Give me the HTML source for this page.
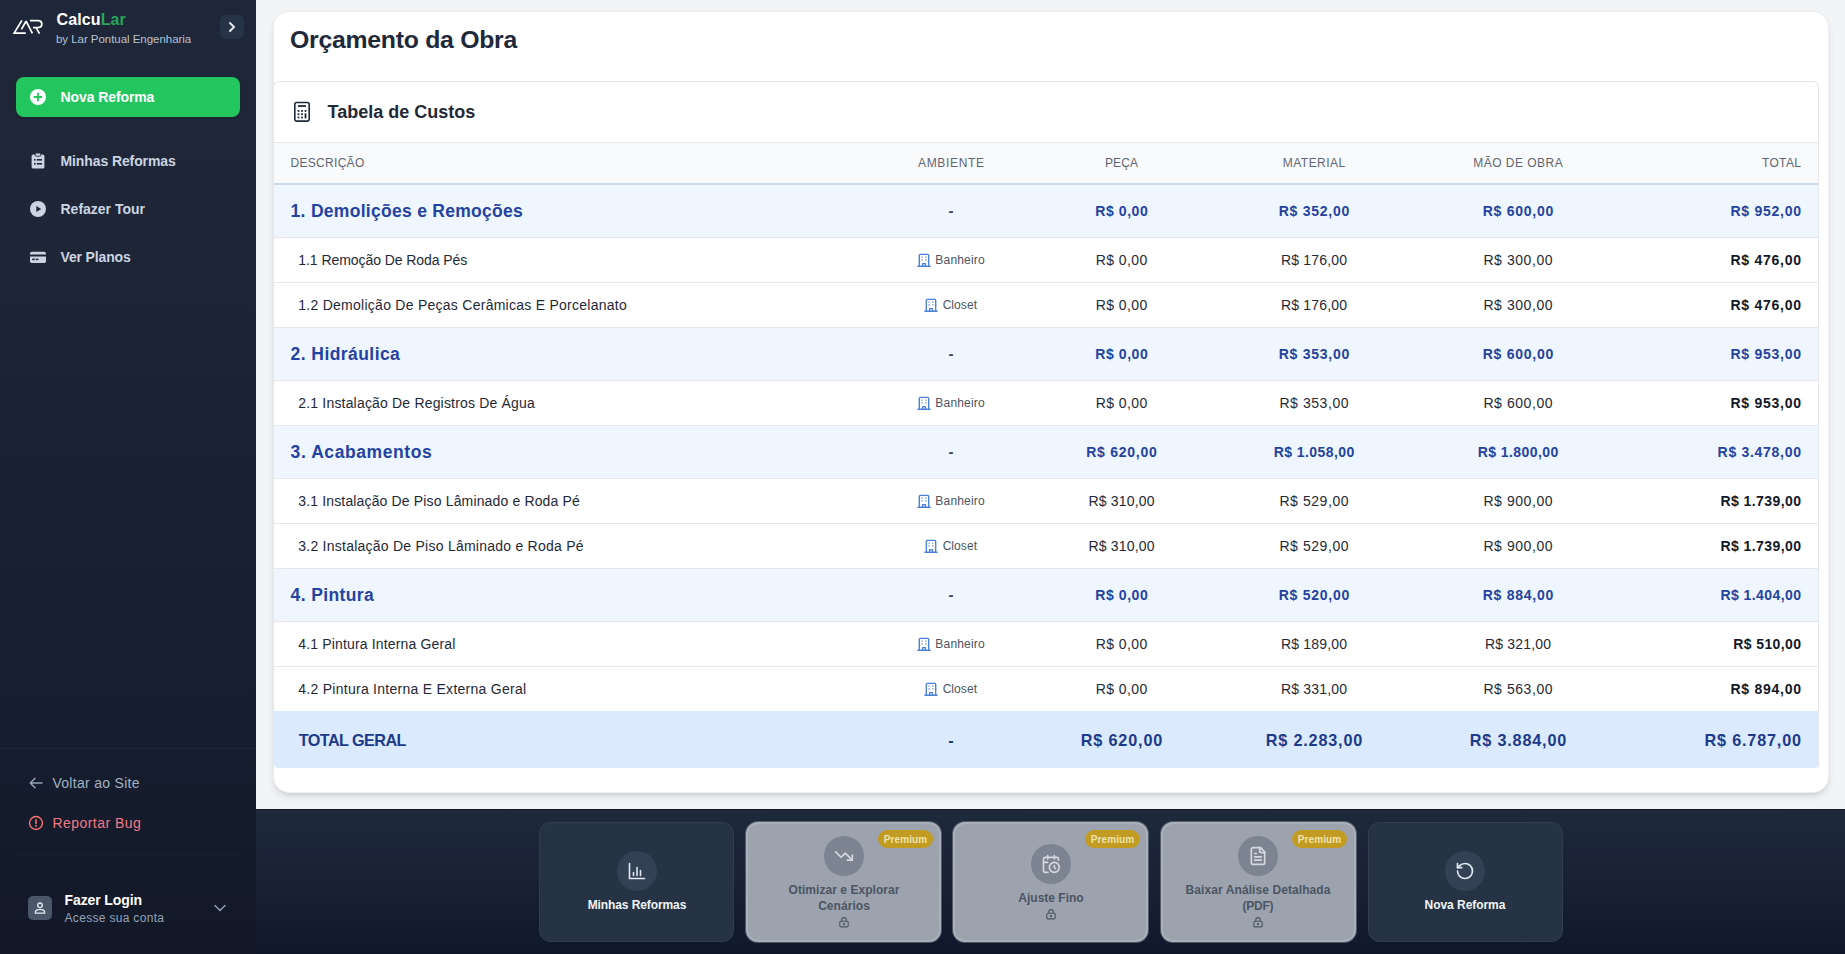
<!DOCTYPE html><html><head><meta charset="utf-8"><title>CalcuLar</title><style>
*{box-sizing:border-box;margin:0;padding:0}
html,body{width:1845px;height:954px;overflow:hidden;font-family:"Liberation Sans",sans-serif;background:#f3f4f6}
.t{position:absolute;height:40px;line-height:40px;white-space:nowrap}
.a{position:absolute}
</style></head><body>
<div class="a" style="left:0;top:0;width:256px;height:954px;background:linear-gradient(180deg,#1e2739 0%,#1e2537 28%,#1a2134 47%,#161d2e 78%,#121827 100%)"></div>
<div class="a" style="left:0;top:60px;width:256px;height:1px;background:rgba(255,255,255,.02)"></div>
<svg class="a" style="left:0;top:0" width="60" height="50" viewBox="0 0 60 50" fill="none" stroke="#fff" stroke-width="1.75" stroke-linecap="butt" stroke-linejoin="miter">
<path d="M21.9 20.4 L14.2 33.1 L25.8 33.1"/>
<path d="M21.4 29.4 L26.1 21.2 L32.4 33.4" stroke-linejoin="bevel"/>
<path d="M30 20.6 L38 20.6 C40.4 20.6 41.8 22.2 41.8 24.05 C41.8 25.9 40.4 27.5 38 27.5 L33 27.5"/>
<path d="M36.2 27.9 L39.5 33.6"/>
</svg>
<div class="t" style="left:56.50px;top:-0.02px;width:800px;text-align:left;font-size:16px;font-weight:700;color:#ffffff;letter-spacing:0.108px;">Calcu<span style="color:#2aa55a">Lar</span></div>
<div class="t" style="left:56.00px;top:18.73px;width:800px;text-align:left;font-size:11.5px;font-weight:400;color:#b8c2d0;letter-spacing:-0.041px;">by Lar Pontual Engenharia</div>
<div class="a" style="left:220px;top:15px;width:24px;height:24px;border-radius:6px;background:#273447"></div>
<svg class="a" style="left:220px;top:15px" width="24" height="24" viewBox="0 0 24 24" fill="none" stroke="#e2e8f0" stroke-width="2" stroke-linecap="round" stroke-linejoin="round"><path d="M10 8l4 4-4 4"/></svg>
<div class="a" style="left:16px;top:77px;width:224px;height:40px;border-radius:8px;background:#22c55e;box-shadow:0 1px 2px rgba(0,0,0,.2)"></div>
<svg class="a" style="left:30px;top:89px" width="16" height="16" viewBox="0 0 16 16"><circle cx="8" cy="8" r="8" fill="#fff"/><path d="M8 4.5v7M4.5 8h7" stroke="#22c55e" stroke-width="1.8" stroke-linecap="round"/></svg>
<div class="t" style="left:60.60px;top:76.96px;width:800px;text-align:left;font-size:14px;font-weight:700;color:#ffffff;letter-spacing:-0.103px;">Nova Reforma</div>
<svg class="a" style="left:30px;top:153px" width="16" height="16" viewBox="0 0 16 16"><rect x="1.6" y="1.6" width="12.8" height="14" rx="1.6" fill="#cbd5e1"/><rect x="5.2" y="0" width="5.6" height="3.2" rx="1" fill="#cbd5e1" stroke="#1e293b" stroke-width="0.9"/><rect x="4" y="6" width="1.6" height="1.6" fill="#1e293b"/><rect x="6.8" y="6" width="5.2" height="1.6" fill="#1e293b"/><rect x="4" y="10" width="1.6" height="1.6" fill="#1e293b"/><rect x="6.8" y="10" width="5.2" height="1.6" fill="#1e293b"/></svg>
<div class="t" style="left:60.50px;top:141.36px;width:800px;text-align:left;font-size:14px;font-weight:700;color:#cbd5e1;letter-spacing:-0.101px;">Minhas Reformas</div>
<svg class="a" style="left:30px;top:201px" width="16" height="16" viewBox="0 0 16 16"><circle cx="8" cy="8" r="8" fill="#cbd5e1"/><path d="M6.3 5v6l4.9-3z" fill="#1d2537"/></svg>
<div class="t" style="left:60.50px;top:189.36px;width:800px;text-align:left;font-size:14px;font-weight:700;color:#cbd5e1;letter-spacing:-0.008px;">Refazer Tour</div>
<svg class="a" style="left:30px;top:249px" width="16" height="16" viewBox="0 0 16 16"><path d="M0 4.5a1.8 1.8 0 0 1 1.8-1.8h12.4A1.8 1.8 0 0 1 16 4.5V5.6H0z" fill="#cbd5e1"/><path d="M0 7.6h16v4.6a1.8 1.8 0 0 1-1.8 1.8H1.8A1.8 1.8 0 0 1 0 12.2z" fill="#cbd5e1"/><rect x="2.2" y="9.6" width="2.6" height="1.6" fill="#1d2537"/><rect x="5.8" y="9.6" width="2.6" height="1.6" fill="#1d2537"/></svg>
<div class="t" style="left:60.50px;top:237.36px;width:800px;text-align:left;font-size:14px;font-weight:700;color:#cbd5e1;letter-spacing:-0.145px;">Ver Planos</div>
<div class="a" style="left:0;top:748px;width:256px;height:1px;background:rgba(255,255,255,.04)"></div>
<svg class="a" style="left:28px;top:775px" width="16" height="16" viewBox="0 0 16 16" fill="none" stroke="#94a3b8" stroke-width="1.5" stroke-linecap="round" stroke-linejoin="round"><path d="M14 8H2.5M7 3.3L2.3 8 7 12.7"/></svg>
<div class="t" style="left:52.40px;top:762.86px;width:800px;text-align:left;font-size:14px;font-weight:400;color:#a3b1c2;letter-spacing:0.301px;">Voltar ao Site</div>
<svg class="a" style="left:28px;top:815px" width="16" height="16" viewBox="0 0 16 16" fill="none" stroke="#f87171" stroke-width="1.4"><circle cx="8" cy="8" r="6.5"/><path d="M8 4.8v3.6M8 10.6v.6" stroke-linecap="round" stroke-width="1.6"/></svg>
<div class="t" style="left:52.40px;top:803.06px;width:800px;text-align:left;font-size:14px;font-weight:400;color:#f27885;letter-spacing:0.465px;">Reportar Bug</div>
<div class="a" style="left:16px;top:854px;width:224px;height:1px;background:rgba(255,255,255,.03)"></div>
<div class="a" style="left:28px;top:896px;width:24px;height:24px;border-radius:5px;background:#4b5768"></div>
<svg class="a" style="left:28px;top:896px" width="24" height="24" viewBox="0 0 24 24" fill="none" stroke="#e2e8f0" stroke-width="1.3"><circle cx="12" cy="9.3" r="2.3"/><path d="M7.4 17.2v-0.6a3 3 0 0 1 3-3h3.2a3 3 0 0 1 3 3v0.6z"/></svg>
<div class="t" style="left:64.50px;top:879.86px;width:800px;text-align:left;font-size:14px;font-weight:700;color:#ffffff;letter-spacing:-0.101px;">Fazer Login</div>
<div class="t" style="left:64.50px;top:897.64px;width:800px;text-align:left;font-size:12px;font-weight:400;color:#94a3b8;letter-spacing:0.317px;">Acesse sua conta</div>
<svg class="a" style="left:212px;top:900px" width="16" height="16" viewBox="0 0 16 16" fill="none" stroke="#94a3b8" stroke-width="1.4" stroke-linecap="round" stroke-linejoin="round"><path d="M3 5.5l5 5 5-5"/></svg>
<div class="a" style="left:256px;top:0;width:1589px;height:808px;background:#f3f4f6"></div>
<div class="a" style="left:273px;top:11px;width:1556px;height:782px;background:#fff;border-radius:16px;box-shadow:0 5px 9px -2px rgba(0,0,0,.13),0 2px 4px -1px rgba(0,0,0,.06);border:1px solid #eceff3"></div>
<div class="t" style="left:290.00px;top:20.49px;width:800px;text-align:left;font-size:24.8px;font-weight:700;color:#1e293b;letter-spacing:-0.263px;">Orçamento da Obra</div>
<div class="a" style="left:273px;top:81px;width:1546px;height:688px;border:1px solid #e5e7eb;border-bottom:none;border-radius:6px 6px 0 0;background:#fff;overflow:hidden">
</div>
<svg class="a" style="left:293px;top:101px" width="18" height="22" viewBox="0 0 18 22" fill="none" stroke="#1f2937" stroke-width="1.6"><rect x="1.8" y="1.5" width="14.4" height="18.6" rx="2"/><path d="M5 5h8" stroke-width="1.8"/><g fill="#1f2937" stroke="none"><rect x="4.6" y="9" width="1.8" height="1.8"/><rect x="8.1" y="9" width="1.8" height="1.8"/><rect x="11.6" y="9" width="1.8" height="1.8"/><rect x="4.6" y="12.3" width="1.8" height="1.8"/><rect x="8.1" y="12.3" width="1.8" height="1.8"/><rect x="11.6" y="12.3" width="1.8" height="5.1"/><rect x="4.6" y="15.6" width="1.8" height="1.8"/><rect x="8.1" y="15.6" width="1.8" height="1.8"/></g></svg>
<div class="t" style="left:327.60px;top:91.51px;width:800px;text-align:left;font-size:18px;font-weight:700;color:#1f2937;letter-spacing:-0.006px;">Tabela de Custos</div>
<div class="a" style="left:274px;top:142px;width:1544px;height:42px;background:#f9fafb;border-top:1px solid #e5e7eb"></div>
<div class="a" style="left:274px;top:183px;width:1544px;height:2px;background:#c9d9ea"></div>
<div class="t" style="left:290.50px;top:142.64px;width:800px;text-align:left;font-size:12px;font-weight:400;color:#5f6673;letter-spacing:0.299px;">DESCRIÇÃO</div>
<div class="t" style="left:551.33px;top:142.64px;width:800px;text-align:center;font-size:12px;font-weight:400;color:#5f6673;letter-spacing:0.666px;">AMBIENTE</div>
<div class="t" style="left:721.55px;top:142.64px;width:800px;text-align:center;font-size:12px;font-weight:400;color:#5f6673;letter-spacing:0.109px;">PEÇA</div>
<div class="t" style="left:914.23px;top:142.64px;width:800px;text-align:center;font-size:12px;font-weight:400;color:#5f6673;letter-spacing:0.450px;">MATERIAL</div>
<div class="t" style="left:1118.24px;top:142.64px;width:800px;text-align:center;font-size:12px;font-weight:400;color:#5f6673;letter-spacing:0.482px;">MÃO DE OBRA</div>
<div class="t" style="left:1001.38px;top:142.64px;width:800px;text-align:right;font-size:12px;font-weight:400;color:#5f6673;letter-spacing:0.377px;">TOTAL</div>
<div class="a" style="left:274px;top:185px;width:1544px;height:53px;background:#eff6ff;border-bottom:1px solid #e5e7eb"></div>
<div class="t" style="left:290.60px;top:191.20px;width:800px;text-align:left;font-size:17.5px;font-weight:700;color:#2443a0;letter-spacing:0.286px;">1. Demolições e Remoções</div>
<div class="t" style="left:551.00px;top:191.17px;width:800px;text-align:center;font-size:15px;font-weight:700;color:#374151;">-</div>
<div class="t" style="left:721.80px;top:191.16px;width:800px;text-align:center;font-size:14px;font-weight:700;color:#2443a0;letter-spacing:0.595px;">R$ 0,00</div>
<div class="t" style="left:914.37px;top:191.16px;width:800px;text-align:center;font-size:14px;font-weight:700;color:#2443a0;letter-spacing:0.744px;">R$ 352,00</div>
<div class="t" style="left:1118.37px;top:191.16px;width:800px;text-align:center;font-size:14px;font-weight:700;color:#2443a0;letter-spacing:0.744px;">R$ 600,00</div>
<div class="t" style="left:1001.74px;top:191.16px;width:800px;text-align:right;font-size:14px;font-weight:700;color:#2443a0;letter-spacing:0.744px;">R$ 952,00</div>
<div class="a" style="left:274px;top:238px;width:1544px;height:45px;background:#ffffff;border-bottom:1px solid #e5e7eb"></div>
<div class="t" style="left:298.30px;top:240.16px;width:800px;text-align:left;font-size:14px;font-weight:400;color:#1f2937;letter-spacing:-0.065px;">1.1 Remoção De Roda Pés</div>
<svg class="a" style="left:916.6px;top:253.0px" width="14" height="14" viewBox="0 0 14 14" fill="none" stroke="#4b80d8" stroke-width="1.35" stroke-linecap="round" stroke-linejoin="round"><path d="M2.3 13.2V2.4a1 1 0 0 1 1-1h7.4a1 1 0 0 1 1 1v10.8"/><path d="M0.9 13.2h12.2"/><path d="M5.6 13.2v-2.6h2.8v2.6"/><path d="M4.9 4.1h.3M8.8 4.1h.3M4.9 6.9h.3M8.8 6.9h.3" stroke-width="1.1"/></svg>
<div class="t" style="left:935.35px;top:240.14px;width:800px;text-align:left;font-size:12px;font-weight:400;color:#4b5563;letter-spacing:0.177px;">Banheiro</div>
<div class="t" style="left:721.72px;top:240.16px;width:800px;text-align:center;font-size:14px;font-weight:400;color:#1f2937;letter-spacing:0.448px;">R$ 0,00</div>
<div class="t" style="left:914.09px;top:240.16px;width:800px;text-align:center;font-size:14px;font-weight:400;color:#1f2937;letter-spacing:0.173px;">R$ 176,00</div>
<div class="t" style="left:1118.28px;top:240.16px;width:800px;text-align:center;font-size:14px;font-weight:400;color:#1f2937;letter-spacing:0.560px;">R$ 300,00</div>
<div class="t" style="left:1001.74px;top:240.16px;width:800px;text-align:right;font-size:14px;font-weight:700;color:#111827;letter-spacing:0.744px;">R$ 476,00</div>
<div class="a" style="left:274px;top:283px;width:1544px;height:45px;background:#ffffff;border-bottom:1px solid #e5e7eb"></div>
<div class="t" style="left:298.30px;top:285.16px;width:800px;text-align:left;font-size:14px;font-weight:400;color:#1f2937;letter-spacing:0.262px;">1.2 Demolição De Peças Cerâmicas E Porcelanato</div>
<svg class="a" style="left:924.0px;top:298.0px" width="14" height="14" viewBox="0 0 14 14" fill="none" stroke="#4b80d8" stroke-width="1.35" stroke-linecap="round" stroke-linejoin="round"><path d="M2.3 13.2V2.4a1 1 0 0 1 1-1h7.4a1 1 0 0 1 1 1v10.8"/><path d="M0.9 13.2h12.2"/><path d="M5.6 13.2v-2.6h2.8v2.6"/><path d="M4.9 4.1h.3M8.8 4.1h.3M4.9 6.9h.3M8.8 6.9h.3" stroke-width="1.1"/></svg>
<div class="t" style="left:942.65px;top:285.14px;width:800px;text-align:left;font-size:12px;font-weight:400;color:#4b5563;letter-spacing:0.064px;">Closet</div>
<div class="t" style="left:721.72px;top:285.16px;width:800px;text-align:center;font-size:14px;font-weight:400;color:#1f2937;letter-spacing:0.448px;">R$ 0,00</div>
<div class="t" style="left:914.09px;top:285.16px;width:800px;text-align:center;font-size:14px;font-weight:400;color:#1f2937;letter-spacing:0.173px;">R$ 176,00</div>
<div class="t" style="left:1118.28px;top:285.16px;width:800px;text-align:center;font-size:14px;font-weight:400;color:#1f2937;letter-spacing:0.560px;">R$ 300,00</div>
<div class="t" style="left:1001.74px;top:285.16px;width:800px;text-align:right;font-size:14px;font-weight:700;color:#111827;letter-spacing:0.744px;">R$ 476,00</div>
<div class="a" style="left:274px;top:328px;width:1544px;height:53px;background:#eff6ff;border-bottom:1px solid #e5e7eb"></div>
<div class="t" style="left:290.60px;top:334.20px;width:800px;text-align:left;font-size:17.5px;font-weight:700;color:#2443a0;letter-spacing:0.430px;">2. Hidráulica</div>
<div class="t" style="left:551.00px;top:334.17px;width:800px;text-align:center;font-size:15px;font-weight:700;color:#374151;">-</div>
<div class="t" style="left:721.80px;top:334.16px;width:800px;text-align:center;font-size:14px;font-weight:700;color:#2443a0;letter-spacing:0.595px;">R$ 0,00</div>
<div class="t" style="left:914.37px;top:334.16px;width:800px;text-align:center;font-size:14px;font-weight:700;color:#2443a0;letter-spacing:0.744px;">R$ 353,00</div>
<div class="t" style="left:1118.37px;top:334.16px;width:800px;text-align:center;font-size:14px;font-weight:700;color:#2443a0;letter-spacing:0.744px;">R$ 600,00</div>
<div class="t" style="left:1001.74px;top:334.16px;width:800px;text-align:right;font-size:14px;font-weight:700;color:#2443a0;letter-spacing:0.744px;">R$ 953,00</div>
<div class="a" style="left:274px;top:381px;width:1544px;height:45px;background:#ffffff;border-bottom:1px solid #e5e7eb"></div>
<div class="t" style="left:298.30px;top:383.16px;width:800px;text-align:left;font-size:14px;font-weight:400;color:#1f2937;letter-spacing:0.180px;">2.1 Instalação De Registros De Água</div>
<svg class="a" style="left:916.6px;top:396.0px" width="14" height="14" viewBox="0 0 14 14" fill="none" stroke="#4b80d8" stroke-width="1.35" stroke-linecap="round" stroke-linejoin="round"><path d="M2.3 13.2V2.4a1 1 0 0 1 1-1h7.4a1 1 0 0 1 1 1v10.8"/><path d="M0.9 13.2h12.2"/><path d="M5.6 13.2v-2.6h2.8v2.6"/><path d="M4.9 4.1h.3M8.8 4.1h.3M4.9 6.9h.3M8.8 6.9h.3" stroke-width="1.1"/></svg>
<div class="t" style="left:935.35px;top:383.14px;width:800px;text-align:left;font-size:12px;font-weight:400;color:#4b5563;letter-spacing:0.177px;">Banheiro</div>
<div class="t" style="left:721.72px;top:383.16px;width:800px;text-align:center;font-size:14px;font-weight:400;color:#1f2937;letter-spacing:0.448px;">R$ 0,00</div>
<div class="t" style="left:914.28px;top:383.16px;width:800px;text-align:center;font-size:14px;font-weight:400;color:#1f2937;letter-spacing:0.560px;">R$ 353,00</div>
<div class="t" style="left:1118.28px;top:383.16px;width:800px;text-align:center;font-size:14px;font-weight:400;color:#1f2937;letter-spacing:0.560px;">R$ 600,00</div>
<div class="t" style="left:1001.74px;top:383.16px;width:800px;text-align:right;font-size:14px;font-weight:700;color:#111827;letter-spacing:0.744px;">R$ 953,00</div>
<div class="a" style="left:274px;top:426px;width:1544px;height:53px;background:#eff6ff;border-bottom:1px solid #e5e7eb"></div>
<div class="t" style="left:290.60px;top:432.20px;width:800px;text-align:left;font-size:17.5px;font-weight:700;color:#2443a0;letter-spacing:0.578px;">3. Acabamentos</div>
<div class="t" style="left:551.00px;top:432.17px;width:800px;text-align:center;font-size:15px;font-weight:700;color:#374151;">-</div>
<div class="t" style="left:721.87px;top:432.16px;width:800px;text-align:center;font-size:14px;font-weight:700;color:#2443a0;letter-spacing:0.744px;">R$ 620,00</div>
<div class="t" style="left:914.21px;top:432.16px;width:800px;text-align:center;font-size:14px;font-weight:700;color:#2443a0;letter-spacing:0.427px;">R$ 1.058,00</div>
<div class="t" style="left:1118.21px;top:432.16px;width:800px;text-align:center;font-size:14px;font-weight:700;color:#2443a0;letter-spacing:0.427px;">R$ 1.800,00</div>
<div class="t" style="left:1001.71px;top:432.16px;width:800px;text-align:right;font-size:14px;font-weight:700;color:#2443a0;letter-spacing:0.714px;">R$ 3.478,00</div>
<div class="a" style="left:274px;top:479px;width:1544px;height:45px;background:#ffffff;border-bottom:1px solid #e5e7eb"></div>
<div class="t" style="left:298.30px;top:481.16px;width:800px;text-align:left;font-size:14px;font-weight:400;color:#1f2937;letter-spacing:0.149px;">3.1 Instalação De Piso Lâminado e Roda Pé</div>
<svg class="a" style="left:916.6px;top:494.0px" width="14" height="14" viewBox="0 0 14 14" fill="none" stroke="#4b80d8" stroke-width="1.35" stroke-linecap="round" stroke-linejoin="round"><path d="M2.3 13.2V2.4a1 1 0 0 1 1-1h7.4a1 1 0 0 1 1 1v10.8"/><path d="M0.9 13.2h12.2"/><path d="M5.6 13.2v-2.6h2.8v2.6"/><path d="M4.9 4.1h.3M8.8 4.1h.3M4.9 6.9h.3M8.8 6.9h.3" stroke-width="1.1"/></svg>
<div class="t" style="left:935.35px;top:481.14px;width:800px;text-align:left;font-size:12px;font-weight:400;color:#4b5563;letter-spacing:0.177px;">Banheiro</div>
<div class="t" style="left:721.59px;top:481.16px;width:800px;text-align:center;font-size:14px;font-weight:400;color:#1f2937;letter-spacing:0.173px;">R$ 310,00</div>
<div class="t" style="left:914.28px;top:481.16px;width:800px;text-align:center;font-size:14px;font-weight:400;color:#1f2937;letter-spacing:0.560px;">R$ 529,00</div>
<div class="t" style="left:1118.28px;top:481.16px;width:800px;text-align:center;font-size:14px;font-weight:400;color:#1f2937;letter-spacing:0.560px;">R$ 900,00</div>
<div class="t" style="left:1001.43px;top:481.16px;width:800px;text-align:right;font-size:14px;font-weight:700;color:#111827;letter-spacing:0.427px;">R$ 1.739,00</div>
<div class="a" style="left:274px;top:524px;width:1544px;height:45px;background:#ffffff;border-bottom:1px solid #e5e7eb"></div>
<div class="t" style="left:298.30px;top:526.16px;width:800px;text-align:left;font-size:14px;font-weight:400;color:#1f2937;letter-spacing:0.244px;">3.2 Instalação De Piso Lâminado e Roda Pé</div>
<svg class="a" style="left:924.0px;top:539.0px" width="14" height="14" viewBox="0 0 14 14" fill="none" stroke="#4b80d8" stroke-width="1.35" stroke-linecap="round" stroke-linejoin="round"><path d="M2.3 13.2V2.4a1 1 0 0 1 1-1h7.4a1 1 0 0 1 1 1v10.8"/><path d="M0.9 13.2h12.2"/><path d="M5.6 13.2v-2.6h2.8v2.6"/><path d="M4.9 4.1h.3M8.8 4.1h.3M4.9 6.9h.3M8.8 6.9h.3" stroke-width="1.1"/></svg>
<div class="t" style="left:942.65px;top:526.14px;width:800px;text-align:left;font-size:12px;font-weight:400;color:#4b5563;letter-spacing:0.064px;">Closet</div>
<div class="t" style="left:721.59px;top:526.16px;width:800px;text-align:center;font-size:14px;font-weight:400;color:#1f2937;letter-spacing:0.173px;">R$ 310,00</div>
<div class="t" style="left:914.28px;top:526.16px;width:800px;text-align:center;font-size:14px;font-weight:400;color:#1f2937;letter-spacing:0.560px;">R$ 529,00</div>
<div class="t" style="left:1118.28px;top:526.16px;width:800px;text-align:center;font-size:14px;font-weight:400;color:#1f2937;letter-spacing:0.560px;">R$ 900,00</div>
<div class="t" style="left:1001.43px;top:526.16px;width:800px;text-align:right;font-size:14px;font-weight:700;color:#111827;letter-spacing:0.427px;">R$ 1.739,00</div>
<div class="a" style="left:274px;top:569px;width:1544px;height:53px;background:#eff6ff;border-bottom:1px solid #e5e7eb"></div>
<div class="t" style="left:290.60px;top:575.20px;width:800px;text-align:left;font-size:17.5px;font-weight:700;color:#2443a0;letter-spacing:0.377px;">4. Pintura</div>
<div class="t" style="left:551.00px;top:575.17px;width:800px;text-align:center;font-size:15px;font-weight:700;color:#374151;">-</div>
<div class="t" style="left:721.80px;top:575.16px;width:800px;text-align:center;font-size:14px;font-weight:700;color:#2443a0;letter-spacing:0.595px;">R$ 0,00</div>
<div class="t" style="left:914.37px;top:575.16px;width:800px;text-align:center;font-size:14px;font-weight:700;color:#2443a0;letter-spacing:0.744px;">R$ 520,00</div>
<div class="t" style="left:1118.37px;top:575.16px;width:800px;text-align:center;font-size:14px;font-weight:700;color:#2443a0;letter-spacing:0.744px;">R$ 884,00</div>
<div class="t" style="left:1001.43px;top:575.16px;width:800px;text-align:right;font-size:14px;font-weight:700;color:#2443a0;letter-spacing:0.427px;">R$ 1.404,00</div>
<div class="a" style="left:274px;top:622px;width:1544px;height:45px;background:#ffffff;border-bottom:1px solid #e5e7eb"></div>
<div class="t" style="left:298.30px;top:624.16px;width:800px;text-align:left;font-size:14px;font-weight:400;color:#1f2937;letter-spacing:0.154px;">4.1 Pintura Interna Geral</div>
<svg class="a" style="left:916.6px;top:637.0px" width="14" height="14" viewBox="0 0 14 14" fill="none" stroke="#4b80d8" stroke-width="1.35" stroke-linecap="round" stroke-linejoin="round"><path d="M2.3 13.2V2.4a1 1 0 0 1 1-1h7.4a1 1 0 0 1 1 1v10.8"/><path d="M0.9 13.2h12.2"/><path d="M5.6 13.2v-2.6h2.8v2.6"/><path d="M4.9 4.1h.3M8.8 4.1h.3M4.9 6.9h.3M8.8 6.9h.3" stroke-width="1.1"/></svg>
<div class="t" style="left:935.35px;top:624.14px;width:800px;text-align:left;font-size:12px;font-weight:400;color:#4b5563;letter-spacing:0.177px;">Banheiro</div>
<div class="t" style="left:721.72px;top:624.16px;width:800px;text-align:center;font-size:14px;font-weight:400;color:#1f2937;letter-spacing:0.448px;">R$ 0,00</div>
<div class="t" style="left:914.09px;top:624.16px;width:800px;text-align:center;font-size:14px;font-weight:400;color:#1f2937;letter-spacing:0.173px;">R$ 189,00</div>
<div class="t" style="left:1118.09px;top:624.16px;width:800px;text-align:center;font-size:14px;font-weight:400;color:#1f2937;letter-spacing:0.173px;">R$ 321,00</div>
<div class="t" style="left:1001.38px;top:624.16px;width:800px;text-align:right;font-size:14px;font-weight:700;color:#111827;letter-spacing:0.385px;">R$ 510,00</div>
<div class="a" style="left:274px;top:667px;width:1544px;height:45px;background:#ffffff;border-bottom:1px solid #e5e7eb"></div>
<div class="t" style="left:298.30px;top:669.16px;width:800px;text-align:left;font-size:14px;font-weight:400;color:#1f2937;letter-spacing:0.269px;">4.2 Pintura Interna E Externa Geral</div>
<svg class="a" style="left:924.0px;top:682.0px" width="14" height="14" viewBox="0 0 14 14" fill="none" stroke="#4b80d8" stroke-width="1.35" stroke-linecap="round" stroke-linejoin="round"><path d="M2.3 13.2V2.4a1 1 0 0 1 1-1h7.4a1 1 0 0 1 1 1v10.8"/><path d="M0.9 13.2h12.2"/><path d="M5.6 13.2v-2.6h2.8v2.6"/><path d="M4.9 4.1h.3M8.8 4.1h.3M4.9 6.9h.3M8.8 6.9h.3" stroke-width="1.1"/></svg>
<div class="t" style="left:942.65px;top:669.14px;width:800px;text-align:left;font-size:12px;font-weight:400;color:#4b5563;letter-spacing:0.064px;">Closet</div>
<div class="t" style="left:721.72px;top:669.16px;width:800px;text-align:center;font-size:14px;font-weight:400;color:#1f2937;letter-spacing:0.448px;">R$ 0,00</div>
<div class="t" style="left:914.09px;top:669.16px;width:800px;text-align:center;font-size:14px;font-weight:400;color:#1f2937;letter-spacing:0.173px;">R$ 331,00</div>
<div class="t" style="left:1118.28px;top:669.16px;width:800px;text-align:center;font-size:14px;font-weight:400;color:#1f2937;letter-spacing:0.560px;">R$ 563,00</div>
<div class="t" style="left:1001.74px;top:669.16px;width:800px;text-align:right;font-size:14px;font-weight:700;color:#111827;letter-spacing:0.744px;">R$ 894,00</div>
<div class="a" style="left:274px;top:711px;width:1544px;height:57px;background:#dbeafe;border-radius:0 0 4px 4px"></div>
<div class="t" style="left:298.80px;top:719.79px;width:800px;text-align:left;font-size:16.2px;font-weight:700;color:#1e3a8a;letter-spacing:-0.572px;">TOTAL GERAL</div>
<div class="t" style="left:551.00px;top:719.79px;width:800px;text-align:center;font-size:16.2px;font-weight:700;color:#1e3a8a;">-</div>
<div class="t" style="left:721.93px;top:719.79px;width:800px;text-align:center;font-size:16.2px;font-weight:700;color:#1e3a8a;letter-spacing:0.861px;">R$ 620,00</div>
<div class="t" style="left:914.41px;top:719.79px;width:800px;text-align:center;font-size:16.2px;font-weight:700;color:#1e3a8a;letter-spacing:0.826px;">R$ 2.283,00</div>
<div class="t" style="left:1118.41px;top:719.79px;width:800px;text-align:center;font-size:16.2px;font-weight:700;color:#1e3a8a;letter-spacing:0.826px;">R$ 3.884,00</div>
<div class="t" style="left:1001.83px;top:719.79px;width:800px;text-align:right;font-size:16.2px;font-weight:700;color:#1e3a8a;letter-spacing:0.826px;">R$ 6.787,00</div>
<div class="a" style="left:256px;top:809px;width:1589px;height:145px;border-top:1px solid #131a2a;background:linear-gradient(180deg,#1e293b 0%,#1a2236 45%,#0f172a 100%)"></div>
<div class="a" style="left:539px;top:822px;width:195px;height:120px;border-radius:12px;background:#263345;border:1px solid rgba(255,255,255,.05)"></div>
<div class="a" style="left:617px;top:850.5px;width:40px;height:40px;border-radius:20px;background:#334155"></div>
<svg class="a" style="left:627px;top:861px" width="20" height="20" viewBox="0 0 20 20" fill="none" stroke="#e2e8f0" stroke-width="1.6" stroke-linecap="round"><path d="M2.5 2.5v15h15"/><path d="M6.5 14.5v-3M10 14.5v-8M13.5 14.5v-5"/></svg>
<div class="t" style="left:236.95px;top:884.64px;width:800px;text-align:center;font-size:12px;font-weight:700;color:#f1f5f9;letter-spacing:-0.097px;">Minhas Reformas</div>
<div class="a" style="left:746px;top:822px;width:195px;height:120px;border-radius:12px;background:#9ca3ae;border:2px solid #a9b0ba;box-shadow:0 0 0 1px rgba(120,128,140,.6)"></div>
<div class="a" style="left:878px;top:830px;width:55px;height:18px;border-radius:9px;background:#c29c22"></div>
<div class="t" style="left:505.55px;top:820.01px;width:800px;text-align:center;font-size:10px;font-weight:700;color:#eee2ae;letter-spacing:0.100px;">Premium</div>
<div class="a" style="left:824px;top:836px;width:40px;height:40px;border-radius:20px;background:#7c8391"></div>
<svg class="a" style="left:834px;top:846px" width="20" height="20" viewBox="0 0 24 24" fill="none" stroke="#d5d9df" stroke-width="2" stroke-linecap="round" stroke-linejoin="round"><path d="M22 17l-8.5-8.5-5 5L2 7"/><path d="M16 17h6v-6"/></svg>
<div class="t" style="left:444.02px;top:869.64px;width:800px;text-align:center;font-size:12px;font-weight:700;color:#4b5563;letter-spacing:0.046px;">Otimizar e Explorar</div>
<div class="t" style="left:444.02px;top:885.64px;width:800px;text-align:center;font-size:12px;font-weight:700;color:#4b5563;letter-spacing:0.046px;">Cenários</div>
<svg class="a" style="left:838px;top:916px" width="12" height="12" viewBox="0 0 12 12" fill="none" stroke="#4b5563" stroke-width="1.1"><rect x="1.8" y="5.3" width="8.4" height="5.6" rx="1.2"/><path d="M3.8 5.3V3.8a2.2 2.2 0 0 1 4.4 0v1.5"/><circle cx="6" cy="8.1" r=".5" fill="#4b5563"/></svg>
<div class="a" style="left:953px;top:822px;width:195px;height:120px;border-radius:12px;background:#9ca3ae;border:2px solid #a9b0ba;box-shadow:0 0 0 1px rgba(120,128,140,.6)"></div>
<div class="a" style="left:1085px;top:830px;width:55px;height:18px;border-radius:9px;background:#c29c22"></div>
<div class="t" style="left:712.55px;top:820.01px;width:800px;text-align:center;font-size:10px;font-weight:700;color:#eee2ae;letter-spacing:0.100px;">Premium</div>
<div class="a" style="left:1031px;top:844px;width:40px;height:40px;border-radius:20px;background:#7c8391"></div>
<svg class="a" style="left:1041px;top:854px" width="20" height="20" viewBox="0 0 24 24" fill="none" stroke="#d5d9df" stroke-width="2" stroke-linecap="round" stroke-linejoin="round"><path d="M21 7.5V6a2 2 0 0 0-2-2H5a2 2 0 0 0-2 2v14a2 2 0 0 0 2 2h3.5"/><path d="M16 2v4M8 2v4M3 10h5"/><path d="M17.5 17.5L16 16.3V14"/><circle cx="16" cy="16" r="6"/></svg>
<div class="t" style="left:651.00px;top:877.64px;width:800px;text-align:center;font-size:12px;font-weight:700;color:#4b5563;letter-spacing:-0.000px;">Ajuste Fino</div>
<svg class="a" style="left:1045px;top:908px" width="12" height="12" viewBox="0 0 12 12" fill="none" stroke="#4b5563" stroke-width="1.1"><rect x="1.8" y="5.3" width="8.4" height="5.6" rx="1.2"/><path d="M3.8 5.3V3.8a2.2 2.2 0 0 1 4.4 0v1.5"/><circle cx="6" cy="8.1" r=".5" fill="#4b5563"/></svg>
<div class="a" style="left:1161px;top:822px;width:195px;height:120px;border-radius:12px;background:#9ca3ae;border:2px solid #a9b0ba;box-shadow:0 0 0 1px rgba(120,128,140,.6)"></div>
<div class="a" style="left:1292px;top:830px;width:55px;height:18px;border-radius:9px;background:#c29c22"></div>
<div class="t" style="left:919.55px;top:820.01px;width:800px;text-align:center;font-size:10px;font-weight:700;color:#eee2ae;letter-spacing:0.100px;">Premium</div>
<div class="a" style="left:1238px;top:836px;width:40px;height:40px;border-radius:20px;background:#7c8391"></div>
<svg class="a" style="left:1248px;top:846px" width="20" height="20" viewBox="0 0 24 24" fill="none" stroke="#d5d9df" stroke-width="2" stroke-linecap="round" stroke-linejoin="round"><path d="M15 2H6a2 2 0 0 0-2 2v16a2 2 0 0 0 2 2h12a2 2 0 0 0 2-2V7z"/><path d="M14 2v4a2 2 0 0 0 2 2h4"/><path d="M10 9H8M16 13H8M16 17H8"/></svg>
<div class="t" style="left:858.04px;top:869.64px;width:800px;text-align:center;font-size:12px;font-weight:700;color:#4b5563;letter-spacing:0.082px;">Baixar Análise Detalhada</div>
<div class="t" style="left:857.88px;top:885.64px;width:800px;text-align:center;font-size:12px;font-weight:700;color:#4b5563;letter-spacing:-0.249px;">(PDF)</div>
<svg class="a" style="left:1252px;top:916px" width="12" height="12" viewBox="0 0 12 12" fill="none" stroke="#4b5563" stroke-width="1.1"><rect x="1.8" y="5.3" width="8.4" height="5.6" rx="1.2"/><path d="M3.8 5.3V3.8a2.2 2.2 0 0 1 4.4 0v1.5"/><circle cx="6" cy="8.1" r=".5" fill="#4b5563"/></svg>
<div class="a" style="left:1368px;top:822px;width:195px;height:120px;border-radius:12px;background:#263345;border:1px solid rgba(255,255,255,.05)"></div>
<div class="a" style="left:1445px;top:851px;width:40px;height:40px;border-radius:20px;background:#334155"></div>
<svg class="a" style="left:1455px;top:861px" width="20" height="20" viewBox="0 0 24 24" fill="none" stroke="#e2e8f0" stroke-width="2" stroke-linecap="round" stroke-linejoin="round"><path d="M3 12a9 9 0 1 0 9-9 9.75 9.75 0 0 0-6.74 2.74L3 8"/><path d="M3 3v5h5"/></svg>
<div class="t" style="left:1064.98px;top:884.64px;width:800px;text-align:center;font-size:12px;font-weight:700;color:#f1f5f9;letter-spacing:-0.044px;">Nova Reforma</div>
</body></html>
